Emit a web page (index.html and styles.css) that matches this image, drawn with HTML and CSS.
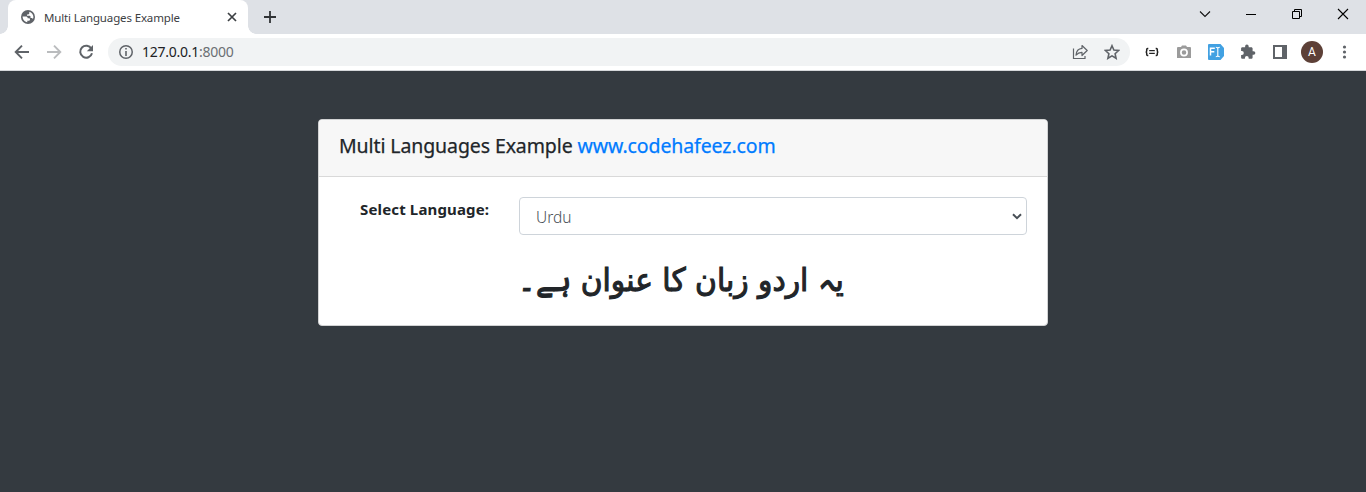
FILE: index.html
```html
<!DOCTYPE html>
<html lang="en">
<head>
<meta charset="utf-8">
<title>Multi Languages Example</title>
<link rel="stylesheet" href="styles.css">
</head>
<body>
<header class="tabstrip">
  <div class="tab">
    <svg class="globe" width="14" height="14" viewBox="0 0 14 14"><circle cx="7" cy="7" r="7" fill="#5f6368"/><path d="M1.600 6.600h3.100c1.200 0 2 .6 2 1.600h1.100c.8 0 1.200.5 1.200 1.200 0 1-.8 1.400-1.800 1.400H6.300v1.400C3.500 12 1.600 9.500 1.600 6.600zM8.300 1.800c2.400.6 4.100 2.700 4.100 5.200 0 .8-.2 1.500-.5 2.100-.3-.8-.8-1.100-1.600-1.100h-.8V6.500c0-.5-.3-.8-.8-.8H6V4.500h1c.8 0 1.300-.5 1.300-1.200z" fill="#fff"/></svg>
    <span class="tab-title">Multi Languages Example</span>
    <svg class="tab-close" width="10" height="10" viewBox="0 0 10 10"><path d="M1 1l8 8M9 1l-8 8" stroke="#3c4043" stroke-width="1.700"/></svg>
  </div>
  <svg class="new-tab" width="12" height="12" viewBox="0 0 12 12"><path d="M6 0v12M0 6h12" stroke="#303336" stroke-width="1.800"/></svg>
  <div class="window-controls">
    <svg width="12" height="12" viewBox="0 0 12 12"><path d="M1 3.500l5 5 5-5" fill="none" stroke="#111" stroke-width="1.100"/></svg>
    <svg width="12" height="12" viewBox="0 0 12 12"><path d="M1 6.500h10" stroke="#000"/></svg>
    <svg width="12" height="12" viewBox="0 0 12 12"><path d="M1.500 3.500h7v7h-7zM3.500 3.500v-2h7v7h-2" fill="none" stroke="#000"/></svg>
    <svg width="12" height="12" viewBox="0 0 12 12"><path d="M1 1l10 10M11 1L1 11" stroke="#000" stroke-width="1.100"/></svg>
  </div>
</header>
<nav class="toolbar">
  <div class="navigation">
    <svg width="16" height="16" viewBox="0 0 16 16"><path d="M15 8H2M8 1.700L1.700 8 8 14.300" fill="none" stroke="#5f6368" stroke-width="1.900"/></svg>
    <svg width="16" height="16" viewBox="0 0 16 16"><path d="M1 8h13M8 1.700L14.300 8 8 14.300" fill="none" stroke="#babcbe" stroke-width="1.900"/></svg>
    <svg width="16" height="16" viewBox="0 0 16 16"><path d="M13.400 4.700A6 6 0 1 0 14 9.300" fill="none" stroke="#5f6368" stroke-width="2"/><path d="M15 1v6.200H8.800z" fill="#5f6368"/></svg>
  </div>
  <div class="address">
    <svg width="14" height="14" viewBox="0 0 14 14"><circle cx="7" cy="7" r="6.250" fill="none" stroke="#5f6368" stroke-width="1.500"/><path d="M7 3v1.600M7 6v5" stroke="#5f6368" stroke-width="1.600"/></svg>
    <span class="url">127.0.0.1<span class="port">:8000</span></span>
    <svg class="share" width="16" height="16" viewBox="0 0 16 16"><path d="M1.500 4.500v10h11.500v-2.500" fill="none" stroke="#5f6368" stroke-width="1.200"/><path d="M4 11.200C4.300 7 6.500 4.700 10 4.400V1.500l5.200 5-5.200 5V8.300C7.200 8.200 5.600 9.200 4 11.200z" fill="none" stroke="#5f6368" stroke-width="1.200" stroke-linejoin="round"/></svg>
    <svg class="star" width="16" height="16" viewBox="0 0 16 16"><path d="M8 1.700l1.900 4.300 4.700.5-3.500 3.200 1 4.600L8 11.900l-4.100 2.400 1-4.600L1.400 6.500l4.700-.5z" fill="none" stroke="#5f6368" stroke-width="1.600"/></svg>
  </div>
  <div class="extensions">
    <svg width="16" height="16" viewBox="0 0 16 16"><path d="M4.300 4.500h-.7q-.9 0-.9 1v1.200q0 1.200-1 1.300 1 .1 1 1.300v1.200q0 1 .9 1h.7M11.700 4.500h.7q.9 0 .9 1v1.200q0 1.200 1 1.300-1 .1-1 1.300v1.200q0 1-.9 1h-.7" fill="none" stroke="#222" stroke-width="1.500"/><path d="M5.200 6.500h5.600M5.200 9.500h5.600" stroke="#222"/><path d="M5.200 8h5.600" stroke="#999"/></svg>
    <svg width="16" height="16" viewBox="0 0 16 16"><path d="M5 3l1-1.500h4L11 3h3q1 0 1 1v10H1V4q0-1 1-1z" fill="#9b9b9b"/><circle cx="8" cy="8.500" r="3.100" fill="none" stroke="#fff" stroke-width="1.700"/></svg>
    <svg width="16" height="16" viewBox="0 0 16 16"><path d="M1 0h11.500L16 4v8l-3.500 4H1q-1 0-1-1V1q0-1 1-1z" fill="#42a1e2"/><path d="M2.500 11.500V4.200h4.300M2.500 7.800h3.800" fill="none" stroke="#fff" stroke-width="1.500"/><path d="M7.800 3.300q2 0 2 1.200v7q0 1.200-2 1.200M11.800 3.300q-2 0-2 1.200v7q0 1.200 2 1.200" fill="none" stroke="#fff" stroke-width="1.100"/></svg>
    <svg width="16" height="16" viewBox="0 0 16 16"><path d="M13.600 7.300h-1V4.600c0-.8-.6-1.400-1.400-1.400H8.700v-.8a1.800 1.800 0 0 0-3.600 0v.8H2.400c-.8 0-1.300.6-1.300 1.400v2.500h.8a1.900 1.900 0 0 1 0 3.800h-.8v2.500c0 .8.600 1.400 1.300 1.400h2.500V14a1.900 1.900 0 0 1 3.800 0v.8h2.500c.8 0 1.400-.6 1.400-1.400v-2.600h1a1.750 1.750 0 0 0 0-3.500z" fill="#5f6368"/></svg>
    <svg width="16" height="16" viewBox="0 0 16 16"><path d="M1 1h14v14H1zM3 3v10h7V3z" fill="#5f6368" fill-rule="evenodd"/></svg>
    <span class="avatar">A</span>
    <svg width="16" height="16" viewBox="0 0 16 16" fill="#5f6368"><circle cx="8.500" cy="3" r="1.600"/><circle cx="8.500" cy="8" r="1.600"/><circle cx="8.500" cy="13" r="1.600"/></svg>
  </div>
</nav>
<main class="page">
  <section class="card">
    <h5 class="card-header"><span class="title">Multi Languages Example</span> <a class="link">www.codehafeez.com</a></h5>
    <div class="card-body">
      <div class="form-row">
        <strong class="label">Select Language:</strong>
        <div class="select"><span>Urdu</span>
          <svg width="10" height="7" viewBox="0 0 10 7"><path d="M1 1.200l4 4 4-4" fill="none" stroke="#495057" stroke-width="2"/></svg>
        </div>
      </div>
      <h1 class="heading" lang="ur" dir="rtl">یہ اردو زبان کا عنوان ہے۔</h1>
    </div>
  </section>
</main>
</body>
</html>
```
FILE: styles.css
```css
* { box-sizing: border-box; }
html, body { height: 100%; }
body {
  margin: 0;
  display: flex;
  flex-direction: column;
  overflow: hidden;
  background: #343a40;
  font-family: "Noto Sans", "Open Sans", sans-serif;
}
svg { display: block; flex: none; }
.tabstrip {
  display: flex;
  align-items: center;
  height: 34px;
  flex: none;
  padding-left: 8px;
  background: #dee1e6;
}
.tab {
  position: relative;
  display: flex;
  align-items: center;
  width: 240px;
  height: 34px;
  padding: 0 11px 0 13px;
  background: #fff;
  border-radius: 8px 8px 0 0;
}
.tab::before, .tab::after {
  content: "";
  position: absolute;
  bottom: 0;
  width: 8px;
  height: 8px;
}
.tab::before { left: -8px; background: radial-gradient(circle at 0 0, transparent 7.5px, #fff 8px); }
.tab::after { right: -8px; background: radial-gradient(circle at 100% 0, transparent 7.5px, #fff 8px); }
.tab-title {
  margin-left: 9px;
  font-size: 11.5px;
  letter-spacing: -.14px;
  color: #3c4043;
  white-space: nowrap;
}
.tab-close { margin-left: auto; }
.new-tab { margin-left: 16px; }
.window-controls {
  display: flex;
  gap: 34px;
  margin: 0 17px 6px auto;
}
.toolbar {
  display: flex;
  align-items: center;
  height: 37px;
  flex: none;
  padding: 0 14px;
  background: #fff;
  border-bottom: 1px solid #d5d7da;
}
.navigation { display: flex; gap: 16px; }
.address {
  display: flex;
  align-items: center;
  width: 1022px;
  height: 28px;
  margin-left: 14px;
  padding: 0 10px 0 11px;
  background: #f1f3f4;
  border-radius: 14px;
}
.url { margin: -1px 0 0 9px; font-size: 14px; color: #202124; letter-spacing: -.25px; }
.port { color: #6b6f73; }
.share { margin-left: auto; }
.star { margin-left: 16px; }
.extensions { display: flex; align-items: center; gap: 16px; margin-left: 14px; }
.avatar {
  width: 22px;
  height: 22px;
  margin: 0 -3px;
  border-radius: 50%;
  background: #5d4037;
  color: #fff;
  font: 12px/22px Roboto, sans-serif;
  text-align: center;
}
.page { padding-top: 48px; }
.card {
  width: 730px;
  height: 207px;
  margin: 0 auto;
  background: #fff;
  border: 1px solid #d2d3d4;
  border-radius: 4px;
  overflow: hidden;
}
.card-header {
  margin: 0;
  height: 57px;
  padding: 12px 20px;
  background: #f7f7f7;
  border-bottom: 1px solid #d9d9d9;
  color: #212529;
  font-size: 19.5px;
  font-weight: 400;
  line-height: 28px;
  letter-spacing: -.1px;
  -webkit-text-stroke: .25px currentColor;
  white-space: nowrap;
}
.link { color: #007bff; }
.card-body { padding: 20px; }
.form-row { display: flex; }
.label {
  width: 159px;
  padding-left: 21px;
  font-size: 15px;
  line-height: 25px;
  letter-spacing: .15px;
  color: #212529;
  white-space: nowrap;
}
.select {
  display: flex;
  align-items: center;
  justify-content: space-between;
  width: 508px;
  height: 38px;
  margin-left: 21px;
  padding: 1px 4px 0 16px;
  border: 1px solid #ced4da;
  border-radius: 4px;
  color: #495057;
  font-size: 15.5px;
  font-weight: 300;
}
.heading {
  margin: 21px 0 0;
  color: #212529;
  font: 400 32px/48px "DejaVu Sans", sans-serif;
  -webkit-text-stroke: 1.1px currentColor;
  text-align: center;
  transform: translateX(-2px) scaleX(.93);
}
```
